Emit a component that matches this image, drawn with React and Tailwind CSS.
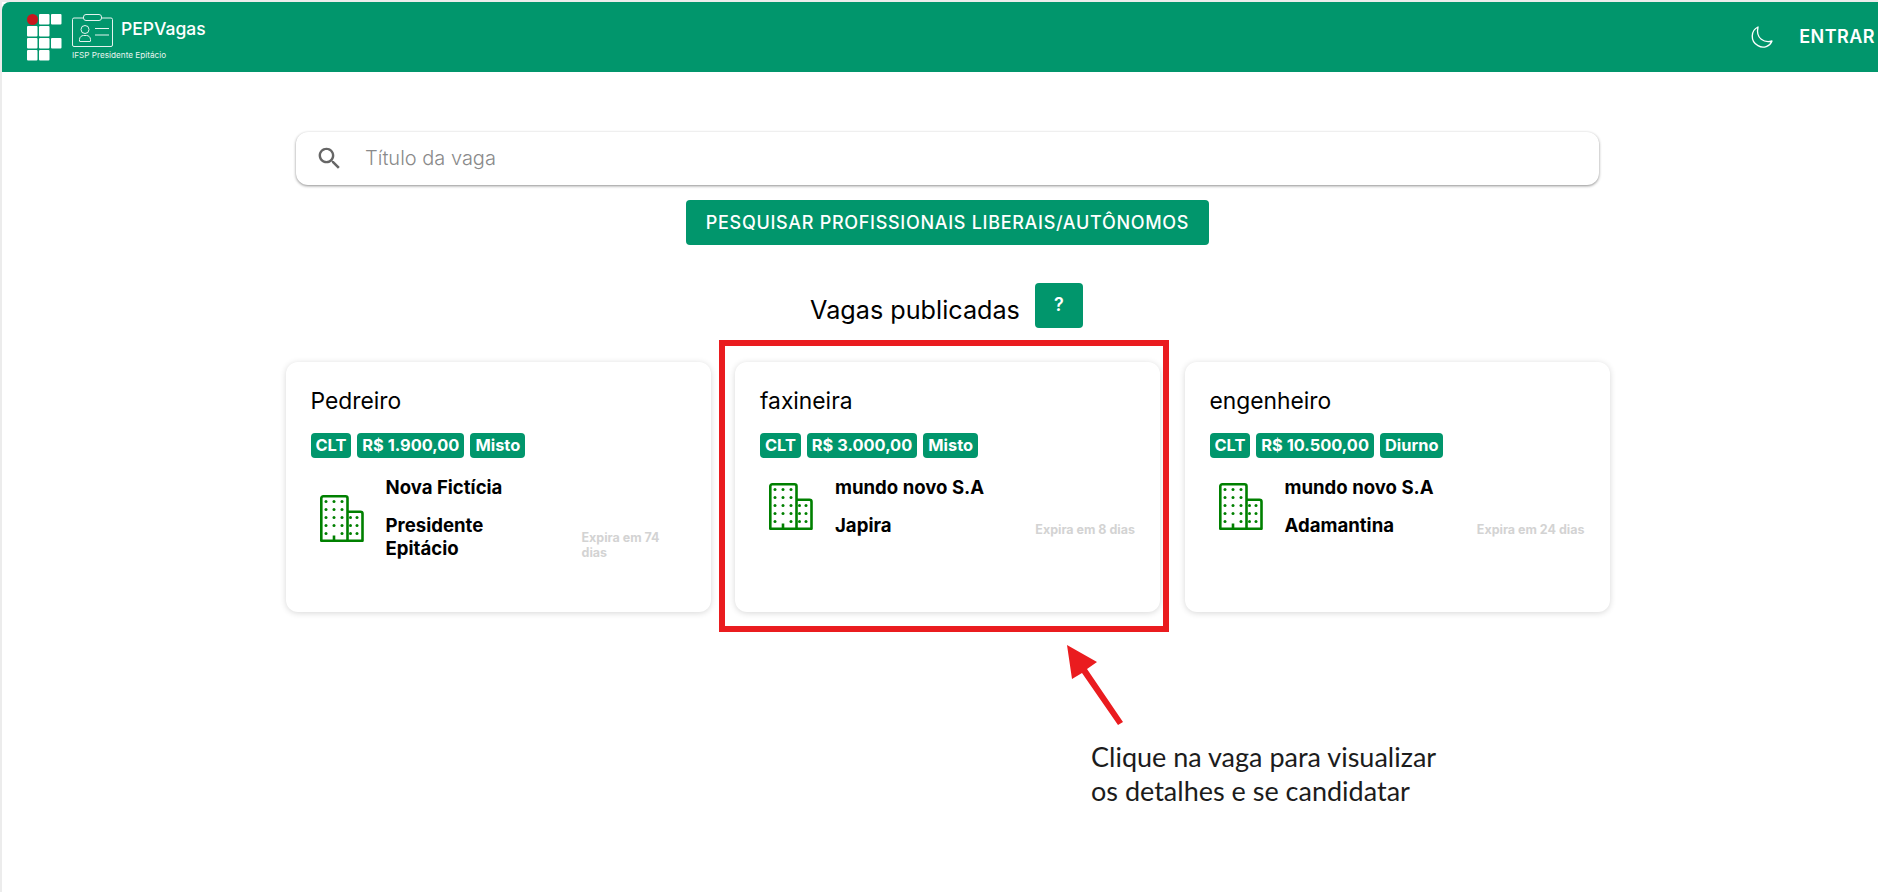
import React from "react";

const GREEN = "bg-[#01966c]";

function IfLogo() {
  const cells = [
    [1, 0], [2, 0], [0, 1], [1, 1], [0, 2], [1, 2], [2, 2], [0, 3], [1, 3],
  ];
  return (
    <svg width="36" height="48" viewBox="0 0 36 48" className="shrink-0">
      <circle cx="5.500" cy="5.500" r="5.500" fill="#c8161d" />
      {cells.map(([c, r]) => (
        <rect key={`${c}-${r}`} x={c * 12} y={r * 12} width="10.500" height="10.500" rx="1" fill="#fff" />
      ))}
    </svg>
  );
}

function BadgeLogo() {
  return (
    <svg width="42" height="33" viewBox="0 0 42 33" fill="none" stroke="#e4f3ee" strokeWidth="1" className="shrink-0">
      <rect x="11.500" y="0.500" width="18" height="6" rx="2.500" />
      <path d="M11.500 4H2a1.500 1.500 0 0 0-1.500 1.500V31A1.500 1.500 0 0 0 2 32.500H39A1.500 1.500 0 0 0 40.500 31V5.500A1.500 1.500 0 0 0 39 4H29.500" />
      <circle cx="13" cy="15.500" r="4" />
      <path d="M7.500 27v-1.500c0-2.500 2-4 4-4h3c2 0 4 1.500 4 4V27a0.500 0.500 0 0 1-0.500 0.500H8a0.500 0.500 0 0 1-0.500-0.500Z" />
      <path d="M23 14.500H37M23 21H37" />
    </svg>
  );
}

function MoonIcon() {
  return (
    <svg width="25" height="25" viewBox="15 20 75 75" fill="none" stroke="#fff" strokeWidth="4" strokeLinejoin="round" className="shrink-0">
      <path d="M42 26C20 36 18 70 42 82C58 92 78 84 84 68C62 74 34 62 42 26Z" />
    </svg>
  );
}

function SearchIcon() {
  return (
    <svg width="29" height="29" viewBox="0 0 24 24" fill="#666666" className="shrink-0">
      <path d="M15.500 14h-.79l-.28-.27C15.410 12.590 16 11.110 16 9.500 16 5.910 13.090 3 9.500 3S3 5.910 3 9.500 5.910 16 9.500 16c1.610 0 3.090-.59 4.230-1.570l.27.28v.79l5 4.990L20.490 19l-4.990-5zm-6 0C7.010 14 5 11.990 5 9.500S7.010 5 9.500 5 14 7.010 14 9.500 11.990 14 9.500 14z" />
    </svg>
  );
}

function BuildingIcon() {
  const dots = [];
  [6, 14, 22].forEach((x) =>
    [6.500, 14.500, 22.500, 30.500, 38.500].forEach((y) => {
      if (!(x === 14 && y === 38.500)) dots.push([x, y]);
    })
  );
  [30.500, 37].forEach((x) => [22.500, 30.500, 38.500].forEach((y) => dots.push([x, y])));
  return (
    <svg width="44" height="47" viewBox="0 0 44 47" fill="none" className="shrink-0">
      <path
        d="M1.300 45.700V3.300a2 2 0 0 1 2-2H25.500a2 2 0 0 1 2 2V45.700ZM27.500 16.800H40.500a2 2 0 0 1 2 2V45.700H27.500M14 45.700V40.500"
        stroke="#008000"
        strokeWidth="2.600"
        strokeLinejoin="round"
      />
      {dots.map(([x, y]) => (
        <circle key={`${x}-${y}`} cx={x} cy={y} r="1.500" fill="#008000" />
      ))}
    </svg>
  );
}

function Tag({ children }) {
  return (
    <span className={`${GREEN} h-[25px] rounded-[4px] px-[5px] text-[16.400px] leading-[25px] font-bold text-white`}>
      {children}
    </span>
  );
}

function JobCard({ title, salary, shift, company, city, expires, expiresClass }) {
  return (
    <article className="h-[250px] w-[425px] rounded-[12px] bg-white px-[25px] pt-[24px] shadow-[0_1px_6px_rgba(0,0,0,0.16)]">
      <h3 className="text-[22.800px] leading-[30px] font-normal text-black">{title}</h3>
      <div className="mt-[17px] flex gap-[6px]">
        <Tag>CLT</Tag>
        <Tag>{salary}</Tag>
        <Tag>{shift}</Tag>
      </div>
      <div className="mt-[18px] flex items-end">
        <div className="flex w-[75px] shrink-0 items-center self-stretch pl-[9px]">
          <BuildingIcon />
        </div>
        <div className="min-w-0 flex-1 pr-[36px] text-[18.600px] leading-[23px] font-bold text-black">
          <p className="mb-[15px]">{company}</p>
          <p>{city}</p>
        </div>
        <p className={`text-[12.500px] leading-[15px] font-bold text-[#d3d3d3] ${expiresClass}`}>{expires}</p>
      </div>
    </article>
  );
}

export default function App() {
  return (
    <div className="relative h-[892px] w-full overflow-hidden bg-white font-['Inter',sans-serif]">
      <div className="h-full border-t-2 border-l-2 border-[#ececec]">
        <header className={`${GREEN} flex h-[70px] items-center rounded-tl-[8px] pr-[3px] pl-[25px] text-white`}>
          <div className="mt-[2px] flex items-center">
            <IfLogo />
          </div>
          <div className="ml-[9px]">
            <div className="flex items-center">
              <BadgeLogo />
              <span className="mb-[2px] ml-[7px] text-[17.500px] leading-[20px] font-medium">PEPVagas</span>
            </div>
            <p className="mt-[2px] text-[8.200px] leading-[12px] font-normal text-[#e6f4ef]">IFSP Presidente Epitácio</p>
          </div>
          <div className="ml-auto flex items-center gap-[25px]">
            <MoonIcon />
            <span className="text-[18px] leading-[24px] font-semibold tracking-[0.450px]">ENTRAR</span>
          </div>
        </header>

        <main className="flex flex-col items-center pt-[60px] pl-[15px]">
          <div className="flex h-[53px] w-[1303px] items-center rounded-[12px] bg-white pl-[19px] shadow-[0_1px_3px_rgba(0,0,0,0.45)]">
            <SearchIcon />
            <span className="mb-[2px] ml-[21px] text-[20px] font-light text-[#8a8a8a]">Título da vaga</span>
          </div>

          <button className={`${GREEN} mt-[15px] h-[45px] w-[523px] rounded-[4px] text-[18px] font-medium tracking-[0.700px] text-white`}>
            PESQUISAR PROFISSIONAIS LIBERAIS/AUTÔNOMOS
          </button>

          <div className="mt-[38px] mr-[2px] flex items-center gap-[15px]">
            <h2 className="pt-[8px] text-[25.200px] leading-[32px] font-normal text-black">Vagas publicadas</h2>
            <button className={`${GREEN} h-[45px] w-[48px] rounded-[4px] pb-[2px] text-[18px] font-semibold text-white`}>?</button>
          </div>

          <section className="mt-[34px] flex gap-[24.500px]">
            <JobCard title="Pedreiro" salary="R$ 1.900,00" shift="Misto" company="Nova Fictícia" city="Presidente Epitácio" expires="Expira em 74 dias" expiresClass="w-[104px] shrink-0" />
            <JobCard title="faxineira" salary="R$ 3.000,00" shift="Misto" company="mundo novo S.A" city="Japira" expires="Expira em 8 dias" expiresClass="shrink-0" />
            <JobCard title="engenheiro" salary="R$ 10.500,00" shift="Diurno" company="mundo novo S.A" city="Adamantina" expires="Expira em 24 dias" expiresClass="shrink-0" />
          </section>
        </main>
      </div>

      <div className="absolute top-[340px] left-[719px] h-[292px] w-[450px] border-[6px] border-[#ea1c1f]" />
      <svg className="absolute top-[640px] left-[1060px]" width="70" height="90" viewBox="0 0 70 90" fill="none">
        <path d="M7 5L37 22L27 29L63 82L58 85L22 33L12 39Z" fill="#ea1c1f" />
      </svg>
      <div className="absolute top-[740px] left-[1091px] font-['Lato',sans-serif] text-[27px] leading-[33.500px] text-[#1c1c1c]">
        <p>Clique na vaga para visualizar</p>
        <p>os detalhes e se candidatar</p>
      </div>
    </div>
  );
}
